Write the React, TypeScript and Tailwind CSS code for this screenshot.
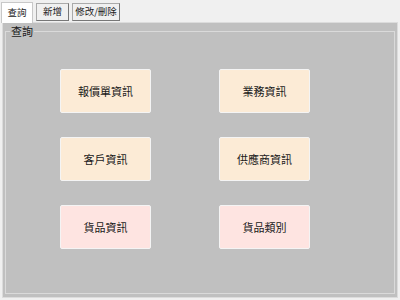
import React, { useState } from 'react';

const tabs = [
  { label: '查詢', w: 'w-[32px]' },
  { label: '新增', w: 'w-[33px]' },
  { label: '修改/刪除', w: 'w-[48px]' },
];

const items = [
  { label: '報價單資訊', tone: 'bg-[#fcebd6]' },
  { label: '業務資訊', tone: 'bg-[#fcebd6]' },
  { label: '客戶資訊', tone: 'bg-[#fcebd6]' },
  { label: '供應商資訊', tone: 'bg-[#fcebd6]' },
  { label: '貨品資訊', tone: 'bg-[#fee4e1]' },
  { label: '貨品類別', tone: 'bg-[#fee4e1]' },
];

const App: React.FC = () => {
  const [active, setActive] = useState(0);

  return (
    <div
      className="w-[400px] h-[300px] bg-[#f0f0f0] text-[#1a1a1a] overflow-hidden"
      style={{ fontFamily: '"Noto Sans CJK TC", "Noto Sans", sans-serif' }}
    >
      <div className="h-[22px] flex items-end pl-[1px] gap-[3px]">
        {tabs.map((t, i) => (
          <button
            key={t.label}
            onClick={() => setActive(i)}
            className={
              i === active
                ? `${t.w} h-[21px] bg-white border border-b-0 border-[#c8c8c8] text-[9.5px] leading-none relative top-[1px]`
                : `${t.w} h-[18px] mb-[1px] bg-[#f0f0f0] border border-[#aaaaaa] border-r-[#777] border-b-[#777] text-[9.5px] leading-none`
            }
          >
            {t.label}
          </button>
        ))}
      </div>
      <div className="mx-[2px] h-[276px] bg-[#c0c0c0] border border-[#dcdcdc] px-[2px] pt-[2px] pb-[3px]">
        <fieldset className="h-full border border-[#dadada] px-0 m-0">
          <legend className="ml-[4px] px-[1px] text-[11px] leading-[13px]">查詢</legend>
          <div className="grid grid-cols-[91px_91px] gap-x-[68px] pl-[54px] pt-[31px] gap-y-[24px]">
            {items.map((it) => (
              <button
                key={it.label}
                className={`h-[44px] ${it.tone} border border-[#f4f4f4] rounded-[2px] text-[11px]`}
              >
                {it.label}
              </button>
            ))}
          </div>
        </fieldset>
      </div>
    </div>
  );
};

export default App;
